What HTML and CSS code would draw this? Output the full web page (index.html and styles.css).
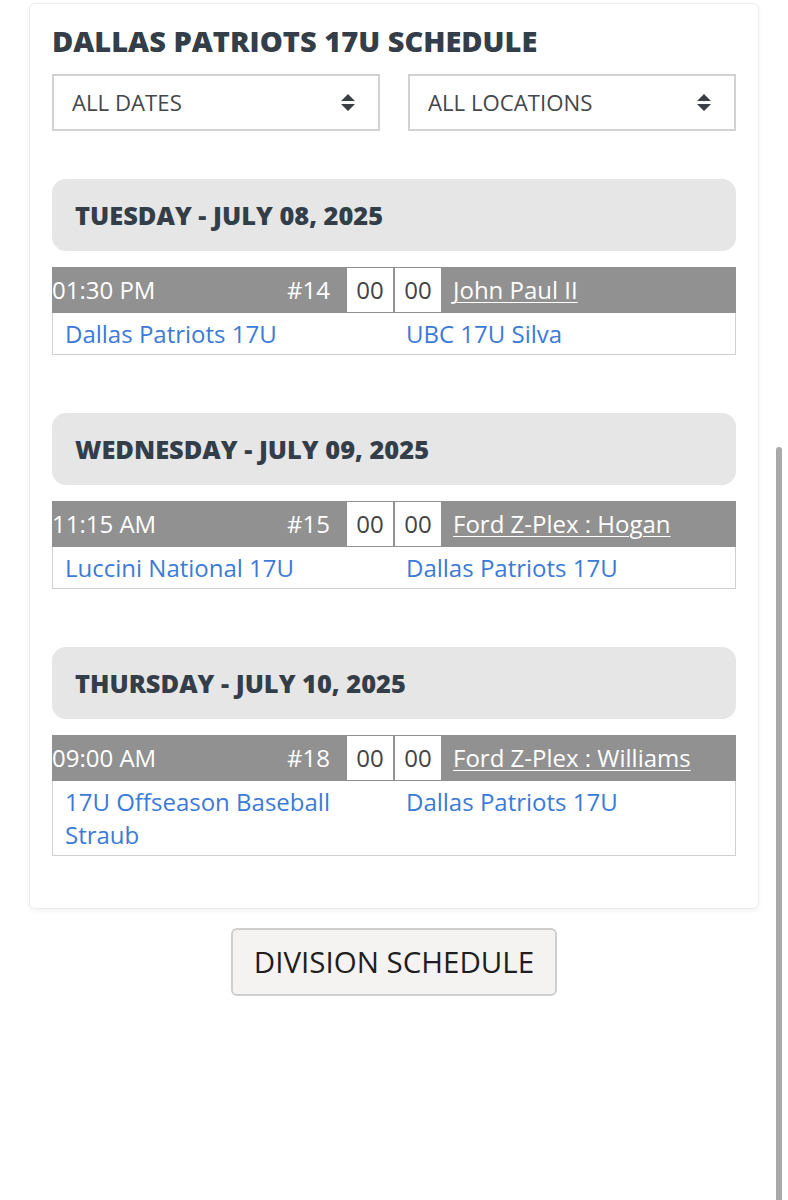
FILE: index.html
```html
<!DOCTYPE html>
<html>
<head>
<meta charset="utf-8">
<link rel="stylesheet" href="styles.css">
</head>
<body>
<div class="page">
  <div class="card">
    <h1 class="title">DALLAS PATRIOTS 17U SCHEDULE</h1>
    <div class="filters">
      <div class="select"><span>ALL DATES</span>
        <svg class="arrows" width="16" height="20" viewBox="0 0 16 20"><path d="M8 1 L15 8 L1 8 Z M1 11 L15 11 L8 18 Z" fill="#3a3f44"/></svg>
      </div>
      <div class="select"><span>ALL LOCATIONS</span>
        <svg class="arrows" width="16" height="20" viewBox="0 0 16 20"><path d="M8 1 L15 8 L1 8 Z M1 11 L15 11 L8 18 Z" fill="#3a3f44"/></svg>
      </div>
    </div>

    <div class="day">
      <div class="day-head">TUESDAY - JULY 08, 2025</div>
      <div class="game">
        <div class="game-top">
          <div class="time"><span>01:30 PM</span><span>#14</span></div>
          <div class="score">00</div>
          <div class="score">00</div>
          <div class="loc"><a href="#">John Paul II</a></div>
        </div>
        <div class="game-teams">
          <a class="team" href="#">Dallas Patriots 17U</a>
          <a class="team" href="#">UBC 17U Silva</a>
        </div>
      </div>
    </div>

    <div class="day">
      <div class="day-head">WEDNESDAY - JULY 09, 2025</div>
      <div class="game">
        <div class="game-top">
          <div class="time"><span>11:15 AM</span><span>#15</span></div>
          <div class="score">00</div>
          <div class="score">00</div>
          <div class="loc"><a href="#">Ford Z-Plex : Hogan</a></div>
        </div>
        <div class="game-teams">
          <a class="team" href="#">Luccini National 17U</a>
          <a class="team" href="#">Dallas Patriots 17U</a>
        </div>
      </div>
    </div>

    <div class="day">
      <div class="day-head">THURSDAY - JULY 10, 2025</div>
      <div class="game">
        <div class="game-top">
          <div class="time"><span>09:00 AM</span><span>#18</span></div>
          <div class="score">00</div>
          <div class="score">00</div>
          <div class="loc"><a href="#">Ford Z-Plex : Williams</a></div>
        </div>
        <div class="game-teams">
          <a class="team" href="#">17U Offseason Baseball Straub</a>
          <a class="team" href="#">Dallas Patriots 17U</a>
        </div>
      </div>
    </div>
  </div>
  <div class="actions">
    <button class="btn">DIVISION SCHEDULE</button>
  </div>
  <div class="scrollbar"></div>
</div>
</body>
</html>
```

FILE: styles.css
```css
html, body {
  margin: 0;
  padding: 0;
  background: #ffffff;
}
body {
  font-family: "Open Sans", "Liberation Sans", sans-serif;
  color: #333e48;
}
.page {
  position: relative;
  width: 788px;
  height: 1200px;
  overflow: hidden;
}
.card {
  box-sizing: border-box;
  width: 730px;
  margin: 3px 0 0 29px;
  border: 1px solid #ececec;
  border-radius: 6px;
  box-shadow: 0 2px 5px rgba(0, 0, 0, 0.05);
  padding: 18px 22px 52px;
}
.title {
  margin: 0;
  font-size: 29px;
  line-height: 38px;
  font-weight: 800;
  color: #333e48;
}
.filters {
  display: flex;
  gap: 28px;
  margin-top: 14px;
}
.select {
  box-sizing: border-box;
  flex: 1;
  height: 57px;
  border: 2px solid #d2d2d2;
  display: flex;
  align-items: center;
  justify-content: space-between;
  padding: 0 22px 0 18px;
  font-size: 22.2px;
  color: #43484d;
}
.arrows {
  display: block;
}
.day {
  margin-top: 48px;
}
.day + .day {
  margin-top: 58px;
}
.day-head {
  height: 72px;
  background: #e6e6e6;
  border-radius: 14px;
  display: flex;
  align-items: center;
  padding-left: 23px;
  font-size: 25.4px;
  font-weight: 800;
  color: #333e48;
}
.game {
  margin-top: 16px;
}
.game-top {
  display: grid;
  grid-template-columns: 1fr 48px 48px 1fr;
  height: 46px;
  background: #919191;
  font-size: 24px;
}
.time {
  display: flex;
  align-items: center;
  justify-content: space-between;
  padding-right: 16px;
  padding-bottom: 2px;
  color: #ffffff;
}
.score {
  margin: 1px;
  background: #ffffff;
  color: #444;
  display: flex;
  align-items: center;
  justify-content: center;
  padding-bottom: 2px;
}
.loc {
  display: flex;
  align-items: center;
  padding-left: 11px;
  padding-bottom: 2px;
}
.loc a {
  color: #ffffff;
  text-decoration: underline;
  text-underline-offset: 3px;
  text-decoration-thickness: 1px;
}
.game-teams {
  display: grid;
  grid-template-columns: 1fr 1fr;
  border: 1px solid #d0d0d0;
  border-top: none;
}
.team {
  padding: 4px 12px;
  font-size: 24px;
  line-height: 33px;
  color: #3b7bd7;
  text-decoration: none;
}
.actions {
  display: flex;
  justify-content: center;
  margin-top: 19px;
}
.btn {
  box-sizing: border-box;
  width: 326px;
  height: 68px;
  background: #f4f3f1;
  border: 2px solid #cfcfcf;
  border-radius: 6px;
  font-family: "Open Sans", "Liberation Sans", sans-serif;
  font-size: 29.5px;
  color: #1e1e1e;
  padding: 0 0 2px;
}
.scrollbar {
  position: absolute;
  left: 776px;
  top: 447px;
  width: 6px;
  height: 760px;
  border-radius: 3px;
  background: #a9a9a9;
}
```
